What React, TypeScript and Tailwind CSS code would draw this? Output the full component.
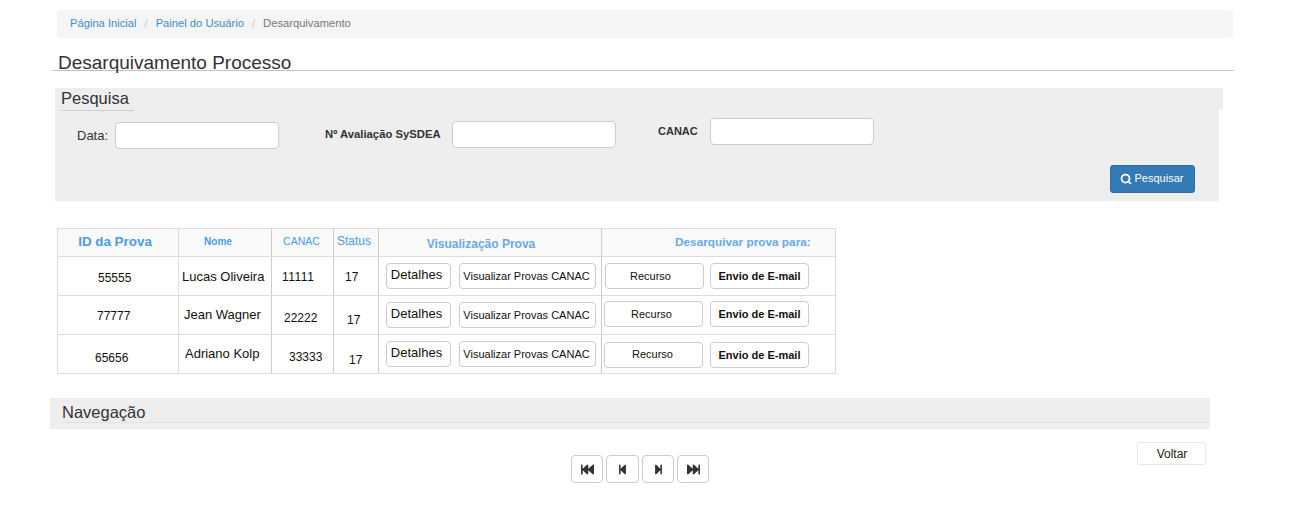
import { Search } from 'lucide-react'
import { FaFastBackward, FaStepBackward, FaStepForward, FaFastForward } from 'react-icons/fa'

const rows = [
  {
    id: '55555', idCls: 'pl-[40px] pt-[4px]',
    nome: 'Lucas Oliveira', nomeCls: 'pl-[3px] pt-[2px]',
    canac: '11111', canacCls: 'pl-[10px] pt-[2px] tracking-[0.5px]',
    status: '17', statusCls: 'pl-[11px] pt-[2px]',
    recursoCls: 'ml-[3px] mt-[6px] mb-[6px] pr-[8px]', envioCls: 'ml-[6px] mt-[6px]',
  },
  {
    id: '77777', idCls: 'pl-[39px] pt-[2px]',
    nome: 'Jean Wagner', nomeCls: 'pl-[5px] pt-[0px]',
    canac: '22222', canacCls: 'pl-[12px] pt-[6px]',
    status: '17', statusCls: 'pl-[13px] pt-[10px]',
    recursoCls: 'ml-[2px] mt-[5px] mb-[7px] pr-[4px]', envioCls: 'ml-[7px] mt-[5px]',
  },
  {
    id: '65656', idCls: 'pl-[37px] pt-[8px]',
    nome: 'Adriano Kolp', nomeCls: 'pl-[6px] pt-[0px]',
    canac: '33333', canacCls: 'pl-[17px] pt-[6px]',
    status: '17', statusCls: 'pl-[15px] pt-[12px]',
    recursoCls: 'ml-[2px] mt-[7px] mb-[5px] pr-[2px] pb-[2px]', envioCls: 'ml-[7px] mt-[7px]',
  },
]

const btn = 'h-[26px] rounded-[4px] border border-[#ccc] bg-white flex items-center justify-center text-[#111]'

export default function App() {
  return (
    <div className="w-[1290px] h-[508px] bg-white pt-[10px] font-['Liberation_Sans',Arial,sans-serif] text-[#333] overflow-hidden">
      {/* Breadcrumb */}
      <div className="ml-[57px] w-[1176px] h-[28px] bg-[#f5f5f5] rounded-[4px] flex items-center pl-[13px] pb-[2px] text-[11.2px]">
        <a className="text-[#428bca]">Página Inicial</a>
        <span className="text-[#ccc] px-[8px]">/</span>
        <a className="text-[#428bca]">Painel do Usuário</a>
        <span className="text-[#ccc] px-[8px]">/</span>
        <span className="text-[#777]">Desarquivamento</span>
      </div>

      {/* Title */}
      <div className="ml-[52px] w-[1182px] h-[33px] border-b border-[#c4c4c4] pl-[6px] flex items-end">
        <h1 className="text-[19px] leading-[22px] mb-[-4px] font-normal">Desarquivamento Processo</h1>
      </div>

      {/* Pesquisa */}
      <div className="ml-[55px] mt-[17px] w-[1168px] h-[22px] bg-[#eee] pl-[6px]">
        <div className="relative w-[73px] h-[23px] border-b border-[#ccc] text-[16.5px] leading-[20px]">Pesquisa</div>
      </div>
      <div className="ml-[55px] w-[1164px] h-[91px] bg-[#eee]">
        <div className="flex items-start">
          <div className="flex items-center mt-[12px] ml-[22px] w-[224px]">
            <span className="text-[13px] w-[38px]">Data:</span>
            <input className="w-[164px] h-[27px] bg-white border border-[#ccc] rounded-[4px]" />
          </div>
          <div className="flex items-center mt-[11px] ml-[24px]">
            <span className="text-[11.3px] font-bold w-[127px]">Nº Avaliação SySDEA</span>
            <input className="w-[164px] h-[27px] bg-white border border-[#ccc] rounded-[4px]" />
          </div>
          <div className="flex items-center mt-[8px] ml-[42px]">
            <span className="text-[11px] font-bold w-[52px]">CANAC</span>
            <input className="w-[164px] h-[27px] bg-white border border-[#ccc] rounded-[4px]" />
          </div>
        </div>
        <div className="flex justify-end mt-[16px] pr-[24px]">
          <button className="w-[85px] h-[28px] bg-[#337ab7] border border-[#2e6da4] rounded-[3px] text-white text-[11px] flex items-center justify-center gap-[3px] pb-[1px] pr-[2px]">
            <Search size={12} strokeWidth={3.5} />
            Pesquisar
          </button>
        </div>
      </div>

      {/* Tabela */}
      <table className="ml-[57px] mt-[27px] w-[778px] table-fixed border-collapse border border-[#ddd] text-[12px] text-[#111]">
        <colgroup>
          <col className="w-[121px]" />
          <col className="w-[93px]" />
          <col className="w-[62px]" />
          <col className="w-[45px]" />
          <col className="w-[223px]" />
          <col className="w-[234px]" />
        </colgroup>
        <thead>
          <tr className="h-[28px] bg-[#f9f9f9] text-[#4a9ce6]">
            <th className="border border-[#ddd] text-[13.4px] font-bold p-0 pr-[6px]">ID da Prova</th>
            <th className="border border-[#ddd] border-r-[#ccc] text-[10px] font-bold p-0 pr-[14px] pb-[2px]">Nome</th>
            <th className="border border-[#ddd] border-r-[#ccc] text-[10.5px] font-normal p-0 pb-[2px] pr-[2px]">CANAC</th>
            <th className="border border-[#ddd] border-r-[#ccc] text-[12px] font-normal p-0 pb-[3px] pr-[4px]">Status</th>
            <th className="border border-[#ddd] border-r-[#ccc] text-[12px] font-bold text-[#6aa9ec] p-0 pr-[18px] pt-[2px]">Visualização Prova</th>
            <th className="border border-[#ddd] text-[11.8px] font-bold text-[#6aa9ec] p-0 text-left pl-[73px]">Desarquivar prova para:</th>
          </tr>
        </thead>
        <tbody>
          {rows.map((r) => (
            <tr key={r.id} className="h-[39px]">
              <td className="border border-[#ddd] p-0">
                <div className={`h-[38px] flex items-center ${r.idCls}`}>{r.id}</div>
              </td>
              <td className="border border-[#ddd] border-r-[#ccc] p-0">
                <div className={`h-[38px] flex items-center text-[13px] ${r.nomeCls}`}>{r.nome}</div>
              </td>
              <td className="border border-[#ddd] border-r-[#ccc] p-0">
                <div className={`h-[38px] flex items-center ${r.canacCls}`}>{r.canac}</div>
              </td>
              <td className="border border-[#ddd] border-r-[#ccc] p-0">
                <div className={`h-[38px] flex items-center ${r.statusCls}`}>{r.status}</div>
              </td>
              <td className="border border-[#ddd] border-r-[#ccc] p-0">
                <div className="h-[38px] flex items-center pl-[7px] gap-[8px]">
                  <button className={`${btn} w-[65px] text-[13px] pb-[3px] pr-[4px]`}>Detalhes</button>
                  <button className={`${btn} w-[137px] text-[11px] pr-[2px]`}>Visualizar Provas CANAC</button>
                </div>
              </td>
              <td className="border border-[#ddd] p-0">
                <div className="h-[38px] flex items-start">
                  <button className={`${btn} w-[99px] text-[11px] ${r.recursoCls}`}>Recurso</button>
                  <button className={`${btn} w-[99px] text-[11px] font-bold ${r.envioCls}`}>Envio de E-mail</button>
                </div>
              </td>
            </tr>
          ))}
        </tbody>
      </table>

      {/* Navegação */}
      <div className="ml-[50px] mt-[24px] w-[1160px] h-[31px] bg-[#eee] pt-[4px]">
        <div className="ml-[12px] h-[21px] border-b border-[#e0e0e0] text-[16.5px] leading-[20px]">Navegação</div>
      </div>

      <div className="flex items-start">
        <div className="ml-[571px] mt-[26px] flex gap-[3px]">
          <button className="w-[32px] h-[28px] rounded-[4px] border border-[#ccc] bg-white flex items-center justify-center text-[#333]">
            <FaFastBackward size={13} />
          </button>
          <button className="w-[33px] h-[28px] rounded-[4px] border border-[#ccc] bg-white flex items-center justify-center text-[#333]">
            <FaStepBackward size={11} />
          </button>
          <button className="w-[32px] h-[28px] rounded-[4px] border border-[#ccc] bg-white flex items-center justify-center text-[#333]">
            <FaStepForward size={11} />
          </button>
          <button className="w-[32px] h-[28px] rounded-[4px] border border-[#ccc] bg-white flex items-center justify-center text-[#333]">
            <FaFastForward size={13} />
          </button>
        </div>
        <button className="ml-[428px] mt-[13px] w-[69px] h-[23px] rounded-[2px] border border-[#e8e8e8] bg-white text-[12px] text-[#222] pt-[1px] pl-[1px]">
          Voltar
        </button>
      </div>
    </div>
  )
}
